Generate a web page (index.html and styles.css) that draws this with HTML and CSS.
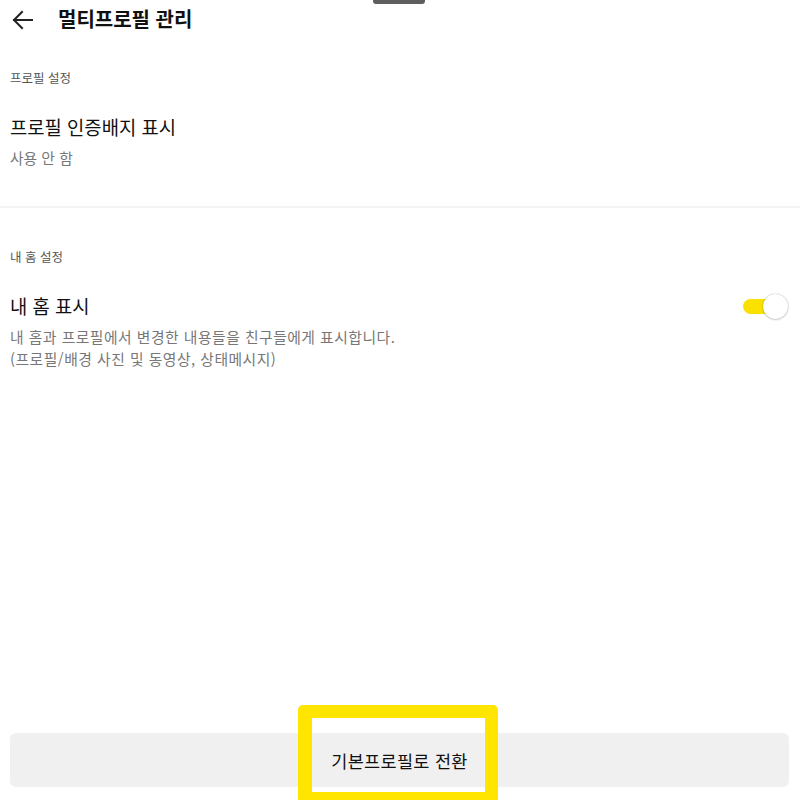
FILE: index.html
```html
<!DOCTYPE html>
<html lang="ko">
<head>
<meta charset="utf-8">
<title>멀티프로필 관리</title>
<link rel="stylesheet" href="styles.css">
</head>
<body>
<div class="page">
  <div class="handle"></div>
  <header class="header">
    <svg class="back" width="24" height="24" viewBox="0 0 24 24" aria-hidden="true">
      <path d="M3 12 H21 M11 4 L3 12 L11 20" fill="none" stroke="#222" stroke-width="2" stroke-linecap="square" stroke-linejoin="miter"/>
    </svg>
    <h1 class="title">멀티프로필 관리</h1>
  </header>

  <section class="section">
    <div class="label">프로필 설정</div>
    <div class="row">
      <div class="row-text">
        <div class="item-title">프로필 인증배지 표시</div>
        <div class="item-sub">사용 안 함</div>
      </div>
    </div>
  </section>

  <div class="divider"></div>

  <section class="section section-home">
    <div class="label">내 홈 설정</div>
    <div class="row">
      <div class="row-text">
        <div class="item-title">내 홈 표시</div>
        <div class="item-sub item-desc">내 홈과 프로필에서 변경한 내용들을 친구들에게 표시합니다.<br>(프로필/배경 사진 및 동영상, 상태메시지)</div>
      </div>
      <div class="toggle"><div class="knob"></div></div>
    </div>
  </section>

  <button class="switch-btn">기본프로필로 전환</button>
  <div class="highlight"></div>
</div>
</body>
</html>
```

FILE: styles.css
```css
html, body {
  margin: 0;
  padding: 0;
  height: 800px;
  overflow: hidden;
  background: #ffffff;
}

body {
  font-family: "Noto Sans CJK KR", "Noto Sans", sans-serif;
  color: #111111;
}

.page {
  position: relative;
  height: 800px;
  display: flex;
  flex-direction: column;
}

.handle {
  position: absolute;
  top: 0;
  left: 373px;
  width: 52px;
  height: 4px;
  background: #5e5e5e;
  border-radius: 0 0 3px 3px;
}

.header {
  height: 38px;
  display: flex;
  align-items: center;
  padding-left: 11px;
}

.back {
  display: block;
  margin-top: 1px;
}

.title {
  margin: 0 0 0 23px;
  font-size: 20px;
  font-weight: 700;
  line-height: 38px;
  letter-spacing: 0;
  color: #111111;
}

.section {
  padding: 0 10px;
  margin-top: 30px;
}

.section-home {
  margin-top: 39px;
}

.label {
  font-size: 12.5px;
  line-height: 20px;
  color: #555555;
}

.row {
  display: flex;
  align-items: flex-start;
  justify-content: space-between;
  margin-top: 25px;
}

.row-text {
  display: flex;
  flex-direction: column;
}

.item-title {
  font-size: 18.8px;
  line-height: 28px;
  color: #111111;
}

.item-sub {
  margin-top: 6px;
  font-size: 14.8px;
  line-height: 22px;
  color: #777777;
}

.item-desc {
  letter-spacing: 0.5px;
}

.divider {
  height: 2px;
  margin-top: 37px;
  background: #f4f4f4;
}

.toggle {
  position: relative;
  width: 45px;
  height: 15px;
  margin-top: 7px;
  margin-right: 2px;
}

.toggle::before {
  content: "";
  position: absolute;
  left: 0;
  top: 0;
  width: 33px;
  height: 15px;
  border-radius: 8px;
  background: #fae100;
}

.knob {
  position: absolute;
  right: 0;
  top: -5px;
  width: 25px;
  height: 25px;
  border-radius: 50%;
  background: #ffffff;
  box-shadow: 0 0 1.5px rgba(0, 0, 0, 0.35), 0 1px 2px rgba(0, 0, 0, 0.15);
}

.switch-btn {
  margin: auto 11px 13px 10px;
  height: 54px;
  border: none;
  border-radius: 6px;
  background: #f0f0f0;
  font-family: "Noto Sans CJK KR", "Noto Sans", sans-serif;
  font-size: 17.5px;
  letter-spacing: 0.3px;
  color: #111111;
  padding: 0;
}

.highlight {
  position: absolute;
  left: 298px;
  top: 705px;
  width: 200px;
  height: 100px;
  box-sizing: border-box;
  border: 13px solid #ffe500;
  border-left-width: 14px;
  border-right-width: 13px;
  border-radius: 5px;
}
```
